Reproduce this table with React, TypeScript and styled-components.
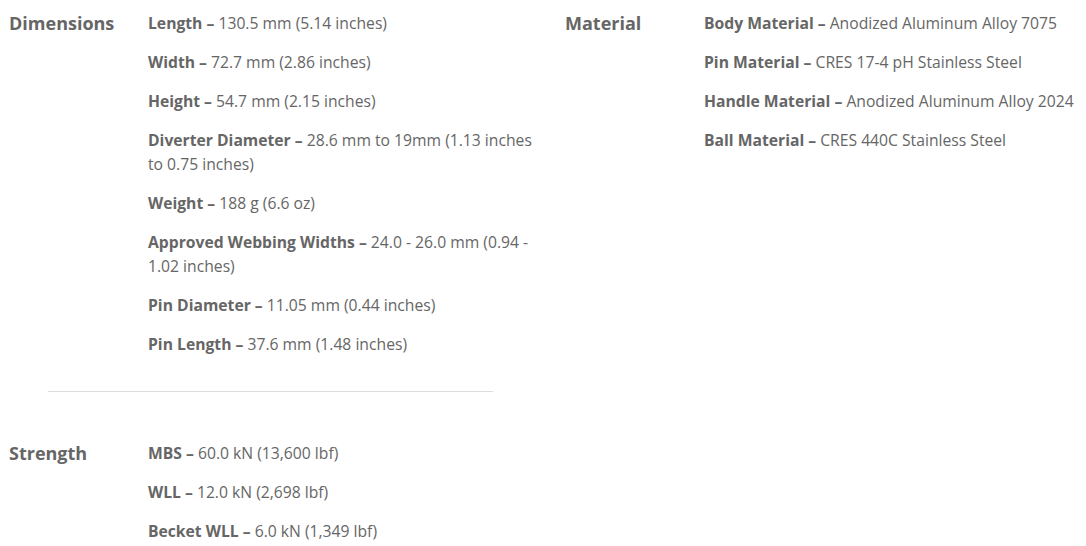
import React from 'react';
import styled, { createGlobalStyle } from 'styled-components';

const GlobalStyle = createGlobalStyle`
  html, body {
    margin: 0;
    padding: 0;
    background: #ffffff;
  }
  body {
    font-family: "Open Sans", "Liberation Sans", sans-serif;
    color: #666666;
  }
`;

const Page = styled.div`
  display: grid;
  grid-template-columns: 537px 1fr;
  column-gap: 19px;
  padding: 11px 0 0 9px;
`;

const Column = styled.div`
  display: flex;
  flex-direction: column;
`;

const Section = styled.div`
  display: flex;
  align-items: flex-start;
`;

const Label = styled.h3`
  flex: 0 0 139px;
  margin: 0;
  font-size: 18px;
  font-weight: 700;
  line-height: 24px;
  color: #666666;
`;

const List = styled.ul`
  flex: 1;
  list-style: none;
  margin: 0;
  padding: 0;
`;

const Item = styled.li`
  font-size: 15.7px;
  line-height: 24px;
  margin-bottom: 15px;
  color: #666666;

  strong {
    font-weight: 700;
  }
`;

const Divider = styled.hr`
  width: 445px;
  margin: 20px 0 49px 39px;
  border: none;
  border-top: 1px solid #dddddd;
`;

type Spec = { name: string; value: string };

const dimensions: Spec[] = [
  { name: 'Length', value: '130.5 mm (5.14 inches)' },
  { name: 'Width', value: '72.7 mm (2.86 inches)' },
  { name: 'Height', value: '54.7 mm (2.15 inches)' },
  { name: 'Diverter Diameter', value: '28.6 mm to 19mm (1.13 inches to 0.75 inches)' },
  { name: 'Weight', value: '188 g (6.6 oz)' },
  { name: 'Approved Webbing Widths', value: '24.0 - 26.0 mm (0.94 - 1.02 inches)' },
  { name: 'Pin Diameter', value: '11.05 mm (0.44 inches)' },
  { name: 'Pin Length', value: '37.6 mm (1.48 inches)' },
];

const strength: Spec[] = [
  { name: 'MBS', value: '60.0 kN (13,600 lbf)' },
  { name: 'WLL', value: '12.0 kN (2,698 lbf)' },
  { name: 'Becket WLL', value: '6.0 kN (1,349 lbf)' },
];

const material: Spec[] = [
  { name: 'Body Material', value: 'Anodized Aluminum Alloy 7075' },
  { name: 'Pin Material', value: 'CRES 17-4 pH Stainless Steel' },
  { name: 'Handle Material', value: 'Anodized Aluminum Alloy 2024' },
  { name: 'Ball Material', value: 'CRES 440C Stainless Steel' },
];

const SpecSection: React.FC<{ title: string; specs: Spec[] }> = ({ title, specs }) => (
  <Section>
    <Label>{title}</Label>
    <List>
      {specs.map((s) => (
        <Item key={s.name}>
          <strong>{s.name} –</strong> {s.value}
        </Item>
      ))}
    </List>
  </Section>
);

const App: React.FC = () => {
  return (
    <>
      <GlobalStyle />
      <Page>
        <Column>
          <SpecSection title="Dimensions" specs={dimensions} />
          <Divider />
          <SpecSection title="Strength" specs={strength} />
        </Column>
        <Column>
          <SpecSection title="Material" specs={material} />
        </Column>
      </Page>
    </>
  );
};

export default App;
